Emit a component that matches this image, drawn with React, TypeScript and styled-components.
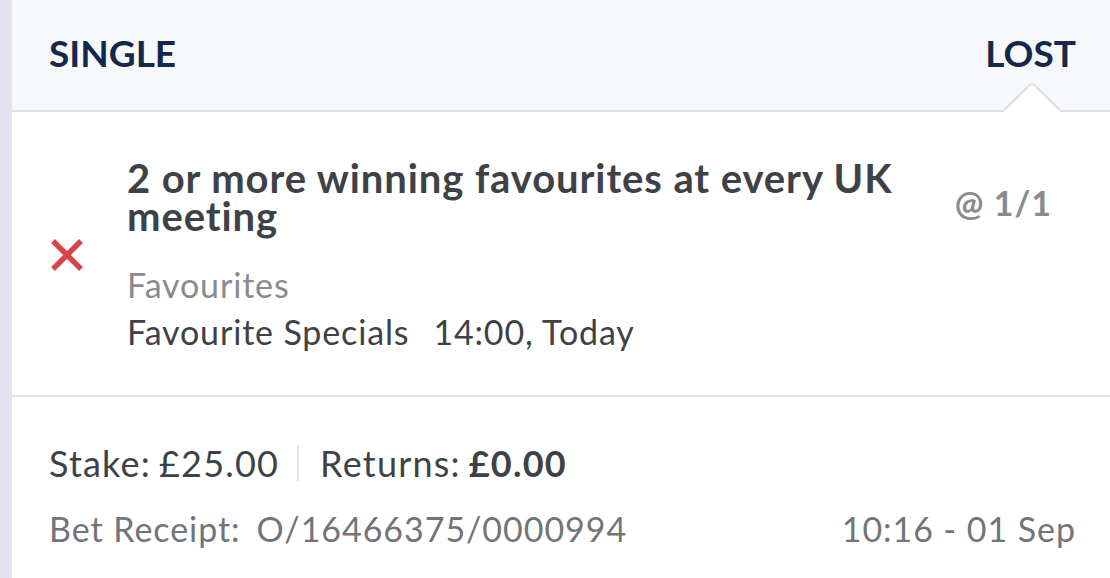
import React from "react";
import styled, { createGlobalStyle } from "styled-components";

const GlobalStyle = createGlobalStyle`
  html, body { margin: 0; padding: 0; background: #ffffff; }
  body { font-family: Lato, "Open Sans", Arial, sans-serif; }
`;

const Page = styled.div`
  display: flex;
  width: 1110px;
  height: 578px;
  overflow: hidden;
  background: #ffffff;
`;

const LeftStrip = styled.div`
  width: 12px;
  flex: 0 0 12px;
  background: #e3e2ee;
`;

const Card = styled.div`
  flex: 1;
  display: flex;
  flex-direction: column;
  min-width: 0;
`;

const Header = styled.div`
  position: relative;
  height: 112px;
  box-sizing: border-box;
  display: flex;
  align-items: center;
  justify-content: space-between;
  padding: 0 34px 4px 37px;
  background: #f7f8fc;
  border-bottom: 2px solid #dedee8;
`;

const HeaderLabel = styled.span`
  font-family: Lato, sans-serif;
  font-weight: 700;
  font-size: 37px;
  line-height: 40px;
  color: #14284b;
`;

const Notch = styled.svg`
  position: absolute;
  right: 50px;
  bottom: -3px;
  width: 56px;
  height: 31px;
`;

const Selection = styled.div`
  display: flex;
  align-items: flex-start;
  padding: 47px 58px 40px 38px;
  border-bottom: 2px solid #e3e3ea;
`;

const IconCell = styled.div`
  width: 77px;
  flex: 0 0 77px;
  margin-top: 79px;
  display: flex;
`;

const Details = styled.div`
  flex: 1;
  min-width: 0;
  display: flex;
  flex-direction: column;
`;

const Title = styled.div`
  font-weight: 700;
  font-size: 40px;
  line-height: 38px;
  letter-spacing: 0.9px;
  color: #3e4247;
  max-width: 800px;
`;

const Market = styled.div<{ $muted?: boolean }>`
  font-size: 34px;
  line-height: 47px;
  letter-spacing: 0.85px;
  color: ${(p) => (p.$muted ? "#8b8b8d" : "#3e4247")};
  margin-top: ${(p) => (p.$muted ? "26px" : "0")};
`;

const Gap = styled.span`
  display: inline-block;
  width: 24px;
`;

const Odds = styled.div`
  font-weight: 700;
  font-size: 34px;
  line-height: 38px;
  letter-spacing: 1px;
  color: #8a8b8e;
  padding-top: 25px;
  white-space: nowrap;
`;

const Footer = styled.div`
  padding: 44px 34px 0 37px;
  display: flex;
  flex-direction: column;
`;

const StakeRow = styled.div`
  display: flex;
  align-items: center;
  font-size: 36px;
  line-height: 44px;
  letter-spacing: 1.2px;
  color: #3e4247;
`;

const Divider = styled.span`
  width: 2px;
  height: 36px;
  background: #e2e2ea;
  margin: 0 21px 0 18px;
`;

const Strong = styled.strong`
  font-weight: 700;
  margin-left: 8px;
`;

const Value = styled.span`
  margin-left: 8px;
`;

const ReceiptRow = styled.div`
  display: flex;
  justify-content: space-between;
  font-size: 34px;
  line-height: 44px;
  letter-spacing: 0.95px;
  color: #737478;
  margin-top: 22px;
`;

const ReceiptId = styled.span`
  margin-left: 16px;
`;

export default function App() {
  return (
    <>
      <GlobalStyle />
      <Page>
        <LeftStrip />
        <Card>
          <Header>
            <HeaderLabel>SINGLE</HeaderLabel>
            <HeaderLabel>LOST</HeaderLabel>
            <Notch viewBox="0 0 56 31">
              <polygon points="0,31 28,3 56,31" fill="#ffffff" />
              <polyline
                points="0,28 26,2.5 30,2.5 56,28"
                fill="none"
                stroke="#dedee8"
                strokeWidth="2"
              />
              <rect x="0" y="28" width="56" height="3" fill="#ffffff" />
            </Notch>
          </Header>
          <Selection>
            <IconCell>
              <svg width="34" height="34" viewBox="0 0 34 34">
                <path
                  d="M3 3 L31 31 M31 3 L3 31"
                  stroke="#d9434a"
                  strokeWidth="5.5"
                  strokeLinecap="butt"
                />
              </svg>
            </IconCell>
            <Details>
              <Title>2 or more winning favourites at every UK meeting</Title>
              <Market $muted>Favourites</Market>
              <Market>
                Favourite Specials
                <Gap />
                14:00, Today
              </Market>
            </Details>
            <Odds>@ 1/1</Odds>
          </Selection>
          <Footer>
            <StakeRow>
              Stake:<Value>£25.00</Value>
              <Divider />
              Returns:<Strong>£0.00</Strong>
            </StakeRow>
            <ReceiptRow>
              <span>
                Bet Receipt:<ReceiptId>O/16466375/0000994</ReceiptId>
              </span>
              <span>10:16 - 01 Sep</span>
            </ReceiptRow>
          </Footer>
        </Card>
      </Page>
    </>
  );
}
